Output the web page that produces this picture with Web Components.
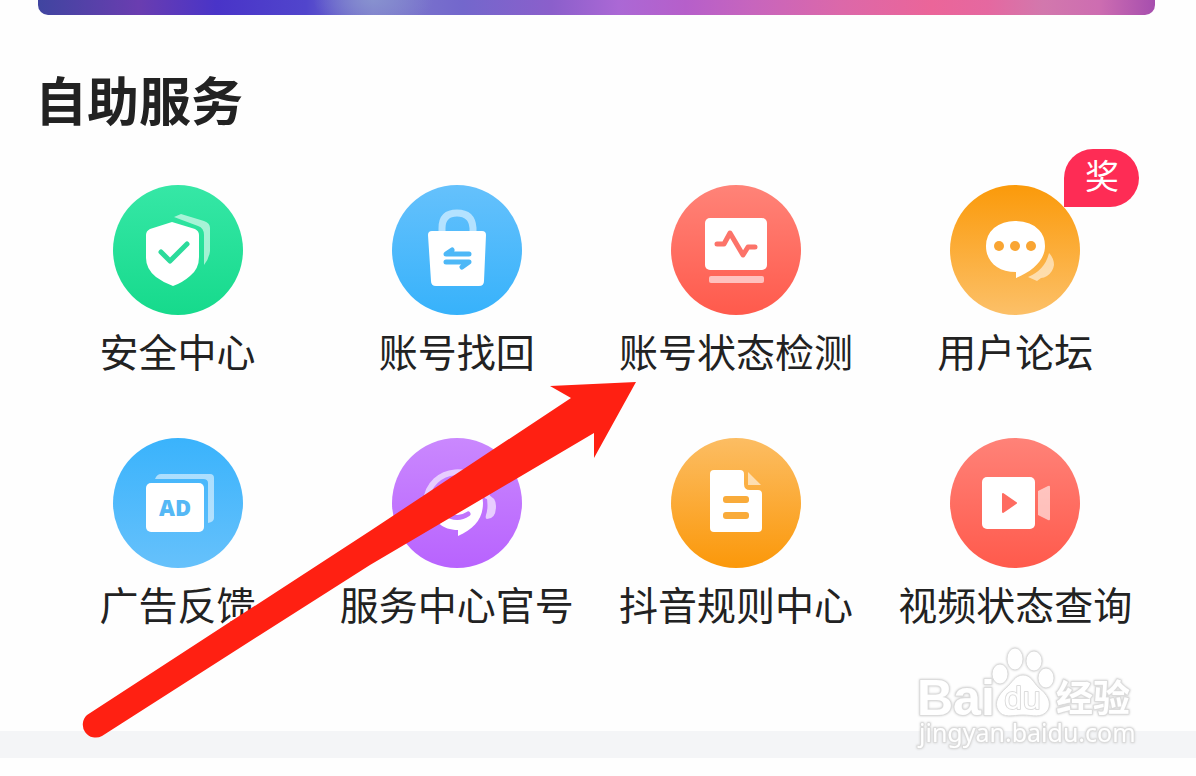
<!DOCTYPE html>
<html lang="zh-CN">
<head>
<meta charset="utf-8">
<title>自助服务</title>
<style>
  body { margin: 0; background: #fefefe; color: #222; font-family: "Noto Sans CJK SC", "Noto Sans", sans-serif; }
</style>
</head>
<body>
<service-page></service-page>

<template id="page-template">
  <style>
    :host { display: block; position: relative; overflow: hidden; }
    main { padding: 0 41px 0 38px; }
    h1 { margin: 45px 0 47px -3px; font-size: 52px; line-height: 78px; font-weight: 700; }
    nav { display: grid; grid-template-columns: repeat(4, 1fr); row-gap: 64px; }
    footer { height: 27px; margin: 104px 0 18px; background: #f4f5f7; }
    pointer-arrow { position: absolute; left: 80px; top: 380px; }
    site-mark { position: absolute; right: 60px; bottom: 22px; }
  </style>
  <main>
    <hero-banner></hero-banner>
    <h1>自助服务</h1>
    <nav aria-label="自助服务">
      <service-item icon="shield" top="#36e7a6" end="#16da8c">安全中心</service-item>
      <service-item icon="lock" top="#65c1fc" end="#37b2fb">账号找回</service-item>
      <service-item icon="pulse" top="#ff8378" end="#ff5a4c">账号状态检测</service-item>
      <service-item icon="chat" top="#fb9a0a" end="#fcc068" badge="奖">用户论坛</service-item>
      <service-item icon="ad" top="#3ab3fc" end="#66c1fb">广告反馈</service-item>
      <service-item icon="support" top="#ca88fe" end="#b863fe">服务中心官号</service-item>
      <service-item icon="rules" top="#fcbd63" end="#fb980a">抖音规则中心</service-item>
      <service-item icon="video" top="#ff8278" end="#ff5a4c">视频状态查询</service-item>
    </nav>
  </main>
  <footer></footer>
  <pointer-arrow></pointer-arrow>
  <site-mark></site-mark>
</template>

<template id="banner-template">
  <style>
    :host {
      display: block; height: 15px; border-radius: 0 0 10px 10px;
      background:
        radial-gradient(ellipse 60px 30px at 30% 0, #8791cf 0, #8791cf00 100%),
        linear-gradient(to right, #4045a0 0, #6a3db0 9%, #4934c8 16%, #5145cc 24%, #7e7bcc 30%, #7367cc 38%, #8b5fcb 46%, #ab68d5 52%, #b65fca 58%, #c765bd 64%, #dc68a9 72%, #eb6599 80%, #e568a0 85%, #d278ad 90%, #cd6db1 95%, #a64eae 100%);
    }
  </style>
</template>

<template id="item-template">
  <style>
    :host { display: block; }
    a { display: flex; flex-direction: column; align-items: center; color: inherit; text-decoration: none; }
    .disc { position: relative; width: 130px; height: 130px; border-radius: 50%; background: linear-gradient(to bottom, var(--top), var(--end)); }
    svg { display: block; width: 130px; height: 130px; }
    .label { margin-top: 6px; font-size: 39px; line-height: 59px; margin-bottom: -6px; white-space: nowrap; }
    .badge { position: absolute; left: 114px; top: -36px; width: 75px; height: 58px; border-radius: 29px 29px 29px 0; background: #fe2c55; color: #fff; font-size: 34px; line-height: 52px; text-align: center; }
  </style>
  <a href="#"><span class="disc"></span><span class="label"><slot></slot></span></a>
</template>

<template id="arrow-template">
  <style>
    :host { display: block; pointer-events: none; }
    svg { display: block; }
  </style>
  <svg width="560" height="362" viewBox="80 380 560 362" aria-hidden="true">
    <path fill="#ff2012" d="M636 382L550 386L571 398L370 531L87 715A13 13 0 0 0 102 736L260 635L370 565L594 433V458Z"/>
  </svg>
</template>

<template id="mark-template">
  <style>
    :host { display: block; pointer-events: none; }
    svg { display: block; filter: drop-shadow(0 0 1px #ccc); }
    text { paint-order: stroke; stroke-linejoin: round; }
  </style>
  <svg width="220" height="108" viewBox="0 0 220 108" fill="#fff" stroke="#dcdcdc" stroke-width="1">
    <text x="1" y="69" font-family="Liberation Sans, sans-serif" font-weight="700" font-size="50" stroke-width="2">Bai</text>
    <ellipse cx="84" cy="28" rx="8" ry="10"/>
    <ellipse cx="99" cy="13" rx="8" ry="11"/>
    <ellipse cx="118" cy="15" rx="8" ry="10"/>
    <ellipse cx="130" cy="32" rx="8" ry="10"/>
    <path d="M107 29C99 29 96 37 90 42C82 49 78 57 82 64C87 73 97 69 107 69C116 69 126 73 132 64C136 56 131 48 123 42C117 36 115 29 107 29Z"/>
    <text x="88" y="63" font-family="Noto Sans, sans-serif" font-size="30" stroke-width="2">du</text>
    <text x="140" y="66" font-family="Noto Sans CJK SC, sans-serif" font-weight="700" font-size="37" stroke-width="2">经验</text>
    <text x="3" y="96" font-family="Noto Sans, sans-serif" font-size="25" stroke-width="2">jingyan.baidu.com</text>
  </svg>
</template>

<script>
  const icons = {
    shield: `
      <path fill="#fff" opacity=".58" d="M61 32L68 29L91 36Q97 38 97 43V66Q96 74 91 80V50Q91 43 85 41Z"/>
      <path fill="#fff" d="M59 37L82 44Q86 46 86 50V72Q86 84 77 91Q69 98 60 101Q51 98 43 92Q33 84 33 73V50Q33 46 37 44Z"/>
      <path fill="none" stroke="#2bdb9b" stroke-width="5" stroke-linecap="round" stroke-linejoin="round" d="M48 67L57 76L74 59"/>`,
    lock: `
      <path fill="none" stroke="#b4e2ff" stroke-width="7" d="M50 46V43Q50 28 65 28T81 43V46"/>
      <path fill="#fff" d="M40 46H90Q94 46 94 50L92 96Q92 101 87 101H44Q39 101 39 96L36 50Q36 46 40 46Z"/>
      <path fill="none" stroke="#4db8f7" stroke-width="5" stroke-linecap="round" stroke-linejoin="round" d="M77 69H54L60 65M54 77H77L70 82"/>`,
    pulse: `
      <rect x="34" y="33" width="62" height="52" rx="5" fill="#fff"/>
      <rect x="38" y="91" width="55" height="7" rx="2" fill="#ffc1be"/>
      <path fill="none" stroke="#fc7369" stroke-width="5" stroke-linecap="round" stroke-linejoin="round" d="M46 59H53L59 48L72 70L77 62H84"/>`,
    chat: `
      <path fill="#fff" opacity=".55" d="M99 68Q104 73 104 80Q103 87 97 91Q94 93 91 93L87 96L78 92Q95 85 99 68Z"/>
      <path fill="#fff" d="M65 36Q81 36 89 45Q95 51 95 61C95 75 83 86 66 93V87C47 87 36 76 36 61Q36 50 44 43Q53 36 65 36Z"/>
      <g fill="#f9a533"><circle cx="49" cy="61" r="5"/><circle cx="65" cy="61" r="5"/><circle cx="81" cy="61" r="5"/></g>`,
    ad: `
      <path fill="#fff" opacity=".55" d="M42 41Q44 36 48 36H97Q101 36 101 40V80Q101 84 95 85V45Q95 41 90 41Z"/>
      <rect x="33" y="45" width="58" height="49" rx="5" fill="#fff"/>
      <text x="62" y="78" text-anchor="middle" font-family="Noto Sans, sans-serif" font-weight="900" font-size="22" fill="#55b8f5">AD</text>`,
    support: `
      <path fill="none" stroke="#e8cdff" stroke-width="6" stroke-linecap="round" d="M34 64C37 27 88 24 95 58"/>
      <rect x="29" y="58" width="7" height="20" rx="3" fill="#e8cdff"/>
      <path fill="#e8cdff" d="M94 56Q104 59 104 68Q104 81 95 81Q93 81 94 77Q97 68 94 56Z"/>
      <path fill="#fff" d="M65 42C81 42 91 52 91 65C91 81 82 91 66 98V92C49 92 39 81 39 66C39 52 50 42 65 42Z"/>
      <path fill="none" stroke="#c174fc" stroke-width="5" stroke-linecap="round" d="M52 74Q64 84 76 76"/>`,
    rules: `
      <path fill="#fff" d="M43 32H69Q73 32 73 36V46Q73 52 79 52H87Q91 52 91 56V90Q91 94 87 94H43Q39 94 39 90V36Q39 32 43 32Z"/>
      <path fill="#fff" opacity=".58" d="M77 34L90 47H77Z"/>
      <g fill="#f9ab3a"><rect x="52" y="58" width="26" height="7" rx="3"/><rect x="52" y="74" width="26" height="7" rx="3"/></g>`,
    video: `
      <rect x="32" y="39" width="53" height="52" rx="5" fill="#fff"/>
      <path fill="#fe6c61" stroke="#fe6c61" stroke-width="2" stroke-linejoin="round" d="M53 56L66 65L53 74Z"/>
      <path fill="#fff" opacity=".58" d="M88 53L98 48Q100 47 100 49V81Q100 83 98 82L88 77Z"/>`
  };

  class TemplateElement extends HTMLElement {
    constructor() {
      super();
      const source = document.getElementById(this.constructor.template);
      this.attachShadow({ mode: "open" }).append(source.content.cloneNode(true));
    }
  }

  class ServiceItem extends TemplateElement {
    static template = "item-template";
    connectedCallback() {
      const disc = this.shadowRoot.querySelector(".disc");
      disc.style.setProperty("--top", this.getAttribute("top"));
      disc.style.setProperty("--end", this.getAttribute("end"));
      disc.innerHTML = `<svg viewBox="0 0 130 130" aria-hidden="true">${icons[this.getAttribute("icon")]}</svg>`;
      if (this.hasAttribute("badge")) {
        const badge = document.createElement("span");
        badge.className = "badge";
        badge.textContent = this.getAttribute("badge");
        disc.append(badge);
      }
    }
  }
  class HeroBanner extends TemplateElement { static template = "banner-template"; }
  class PointerArrow extends TemplateElement { static template = "arrow-template"; }
  class SiteMark extends TemplateElement { static template = "mark-template"; }
  class ServicePage extends TemplateElement { static template = "page-template"; }

  customElements.define("service-item", ServiceItem);
  customElements.define("hero-banner", HeroBanner);
  customElements.define("pointer-arrow", PointerArrow);
  customElements.define("site-mark", SiteMark);
  customElements.define("service-page", ServicePage);
</script>
</body>
</html>
